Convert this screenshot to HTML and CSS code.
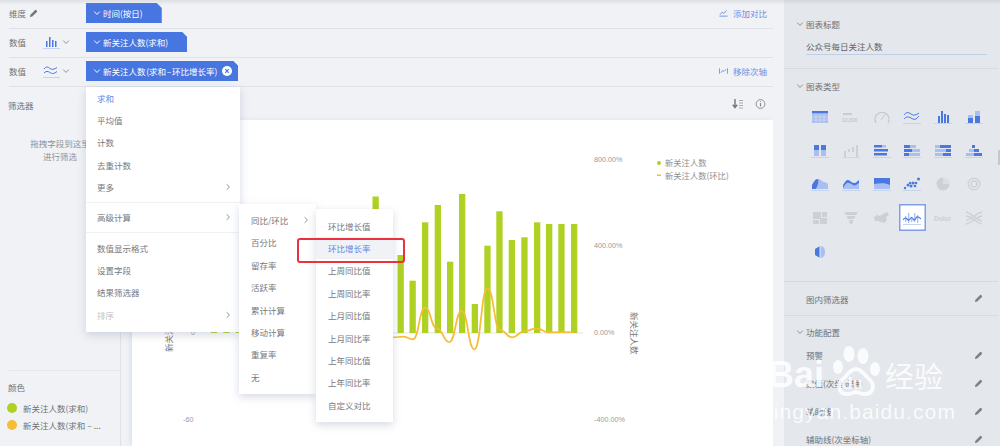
FILE: index.html
```html
<!DOCTYPE html>
<html lang="en">

<head>
  <meta charset="UTF-8" />
  <meta name="viewport" content="width=device-width, initial-scale=1.0" />
  <title>chart editor</title>
  <link rel="stylesheet" href="styles.css">
</head>

<body>
  <svg class="defs" width="0" height="0">
    <symbol id="pencil" viewBox="0 0 10 10">
      <path d="M1 9l.6-2.6L6.8 1.2a.8.8 0 0 1 1.1 0l.9.9a.8.8 0 0 1 0 1.1L3.6 8.4z" fill="currentColor" />
    </symbol>
    <symbol id="chev-down" viewBox="0 0 10 10">
      <path d="M1.5 3.2L5 6.8l3.5-3.6" fill="none" stroke="currentColor" stroke-width="1.2" />
    </symbol>
    <symbol id="chev-right" viewBox="0 0 10 10">
      <path d="M3.2 1.5L6.8 5 3.2 8.5" fill="none" stroke="currentColor" stroke-width="1.2" />
    </symbol>
  </svg>

  <div class="app">
    <div class="main">
      <div class="shelf">
        <div class="shelf-row row-dim">
          <div class="shelf-label">维度 <svg class="pencil-sm"><use href="#pencil" /></svg></div>
          <div class="pill"><svg class="pill-chev"><use href="#chev-down" /></svg>时间(按日)</div>
          <div class="shelf-action">
            <svg class="action-icon" viewBox="0 0 10 8"><path d="M.5 7.5h9M1 6l2.5-3 2 1.5L8.5 1" fill="none" stroke="currentColor" stroke-width="1" /></svg>
            添加对比
          </div>
        </div>
        <div class="shelf-row">
          <div class="shelf-label">数值
            <svg class="shelf-type" viewBox="0 0 17 13">
              <path d="M0 12.5h17" stroke="#c6d3ee" stroke-width="1" />
              <path d="M3 5h1.5v6H3zM6 1h1.5v10H6zM9 4h1.5v7H9zM12 5h1.5v6H12z" fill="#4a78e0" />
            </svg>
            <svg class="shelf-chev"><use href="#chev-down" /></svg>
          </div>
          <div class="pill"><svg class="pill-chev"><use href="#chev-down" /></svg>新关注人数(求和)</div>
        </div>
        <div class="shelf-row">
          <div class="shelf-label">数值
            <svg class="shelf-type" viewBox="0 0 17 13">
              <path d="M0 12.5h17" stroke="#c6d3ee" stroke-width="1" />
              <path d="M1 4c2-3 4-2 6-.5s4 1 7-1M1 8c2-2 4-2 6-.5s4 1.5 7-1" fill="none" stroke="#4a78e0" stroke-width="1" />
            </svg>
            <svg class="shelf-chev"><use href="#chev-down" /></svg>
          </div>
          <div class="pill pill-active">
            <svg class="pill-chev"><use href="#chev-down" /></svg>
            <span>新关注人数 (求和 – 环比增长率)</span>
            <svg class="pill-close" viewBox="0 0 10 10">
              <circle cx="5" cy="5" r="5" fill="#fff" />
              <path d="M3.2 3.2l3.6 3.6M6.8 3.2L3.2 6.8" stroke="#4a78e0" stroke-width="1.2" />
            </svg>
          </div>
          <div class="shelf-action">
            <svg class="action-icon" viewBox="0 0 10 8"><path d="M.5 1v6M9.5 1v6M2 6l2-2.5 1.5 1L8 2" fill="none" stroke="currentColor" stroke-width="1" /></svg>
            移除次轴
          </div>
        </div>
      </div>

      <div class="workspace">
        <div class="side">
          <div class="side-title">筛选器</div>
          <div class="side-hint">拖拽字段到这里<br>进行筛选</div>
          <div class="colors">
            <div class="side-title">颜色</div>
            <div class="color-item"><i class="dot dot-green"></i>新关注人数(求和)</div>
            <div class="color-item"><i class="dot dot-yellow"></i>新关注人数(求和 – ...</div>
          </div>
        </div>

        <div class="content">
          <div class="toolbar">
            <svg class="tool-icon" viewBox="0 0 11 10">
              <path d="M3 0v8M.8 5.8L3 8.6l2.2-2.8" fill="none" stroke="#777" stroke-width="1.4" />
              <path d="M7 1.5h4M7 4h4M7 6.5h4M7 9h4" stroke="#999" stroke-width=".8" />
            </svg>
            <svg class="tool-icon" viewBox="0 0 10 10">
              <circle cx="5" cy="5" r="4.4" fill="none" stroke="#888" stroke-width=".9" />
              <path d="M5 2.2v.9M5 4v3.6" stroke="#888" stroke-width="1.1" />
            </svg>
          </div>
          <div class="chart">
            <svg class="chart-svg" viewBox="132 120 641 326">
              <path d="M393 333h190" stroke="#e3e3e3" stroke-width="1" />
              <g fill="#aed123">
                <rect x="211" y="329" width="6.3" height="4" />
                <rect x="223.4" y="329" width="6.3" height="4" />
                <rect x="235.8" y="329" width="6.3" height="4" />
                <rect x="372.5" y="196.5" width="6.3" height="136.5" />
                <rect x="385" y="255" width="6.3" height="78" />
                <rect x="397.5" y="255" width="6.3" height="78" />
                <rect x="409.5" y="280.7" width="6.3" height="52.3" />
                <rect x="422" y="222.3" width="6.3" height="110.7" />
                <rect x="434.7" y="205" width="6.3" height="128" />
                <rect x="447" y="261.7" width="6.3" height="71.3" />
                <rect x="459" y="194" width="6.3" height="139" />
                <rect x="471.7" y="304" width="6.3" height="29" />
                <rect x="484.3" y="245.7" width="6.3" height="87.3" />
                <rect x="496.3" y="211.3" width="6.3" height="121.7" />
                <rect x="508.7" y="240" width="6.3" height="93" />
                <rect x="521.3" y="237.3" width="6.3" height="95.7" />
                <rect x="534" y="222.3" width="6.3" height="110.7" />
                <rect x="546" y="224" width="6.3" height="109" />
                <rect x="558.3" y="224" width="6.3" height="109" />
                <rect x="571" y="224" width="6.3" height="109" />
              </g>
              <path class="curve" d="M393 337.3C398 337.3 398 336.7 403 336.7C408 336.7 408 339.3 413 339.3C419 339.3 419 307.7 425 307.7C431 307.7 431 328.3 436.7 328.3C443 328.3 443 342 449.3 342C455.5 342 455.5 311 461.7 311C468 311 468 349.3 474.3 349.3C481 349.3 481 288.3 487.3 288.3C494 288.3 494 330 500 330C506 330 506 337.3 512.3 337.3C518.5 337.3 518.5 331 525 331C531 331 531 328.3 536.7 328.3C542.5 328.3 542.5 332.3 548.3 332.3C561 332.3 561 332 573.3 332" />
              <g class="axis-text">
                <text x="594" y="161.500">800.00%</text>
                <text x="594" y="248">400.00%</text>
                <text x="594" y="335">0.00%</text>
                <text x="594" y="422">-400.00%</text>
                <text x="191" y="335">0</text>
                <text x="183" y="422">-60</text>
              </g>
              <g class="axis-title">
                <text transform="translate(631 312) rotate(90)">新关注人数</text>
                <text transform="translate(172 352) rotate(-90)">新关注人数</text>
              </g>
              <circle cx="659" cy="163" r="2" fill="#aed123" />
              <rect x="657" y="174.500" width="4" height="1.500" fill="#f6bd34" />
              <g class="legend-text">
                <text x="665" y="166">新关注人数</text>
                <text x="665" y="179">新关注人数(环比)</text>
              </g>
            </svg>
          </div>
        </div>
      </div>
    </div>

    <div class="panel">
      <div class="panel-thumb"></div>
      <div class="panel-section section-title">
        <div class="panel-heading"><svg class="heading-chev"><use href="#chev-down" /></svg>图表标题</div>
        <div class="title-input">公众号每日关注人数</div>
      </div>
      <div class="panel-section section-types">
        <div class="panel-heading"><svg class="heading-chev"><use href="#chev-down" /></svg>图表类型</div>
        <div class="type-grid">
          <div class="type-cell"><svg viewBox="0 0 18 14"><path d="M1 1h16v2.500H1z" fill="#4a78e0" /><path d="M1 4h16v9H1z" fill="#a9bff0" /><path d="M1 7h16M1 10h16M5 4v9M9 4v9M13 4v9" stroke="#e4e7eb" stroke-width=".5" /></svg></div>
          <div class="type-cell"><svg viewBox="0 0 18 14"><path d="M1 3h9v2H1z" fill="#c9ccd0" /><text class="kpi-text" x="0" y="11.500">12,816</text></svg></div>
          <div class="type-cell"><svg viewBox="0 0 18 14"><path d="M3 13a7 7 0 1 1 12 0" fill="none" stroke="#c4c7cb" stroke-width="1.200" /><path d="M8.500 9.500L12 4.500" stroke="#c4c7cb" stroke-width="1" /></svg></div>
          <div class="type-cell"><svg viewBox="0 0 18 14"><path d="M0 13.500h18" stroke="#c6d3ee" /><path d="M1 5c2-3 4-3 7-1s5 1 8-1M1 9c2-2 4-3 7-1s5 2 8-2" fill="none" stroke="#4a78e0" stroke-width="1" /></svg></div>
          <div class="type-cell"><svg viewBox="0 0 18 14"><path d="M0 13.500h18" stroke="#c6d3ee" /><path d="M4 6h2v7H4zM7 1h2v12H7zM10 4h2v9h-2zM13 5h2v8h-2z" fill="#4a78e0" /></svg></div>
          <div class="type-cell"><svg viewBox="0 0 18 14"><path d="M0 13.500h18" stroke="#c6d3ee" /><path d="M3 8h5v5H3zM10 6h5v7h-5z" fill="#4a78e0" /><path d="M3 5h5v3H3zM10 1h5v5h-5z" fill="#a9bff0" /></svg></div>

          <div class="type-cell"><svg viewBox="0 0 18 14"><path d="M0 13.500h18" stroke="#c6d3ee" /><path d="M3 1h5v5H3zM10 1h5v5h-5z" fill="#4a78e0" /><path d="M3 6h5v6H3zM10 6h5v6h-5z" fill="#a9bff0" /></svg></div>
          <div class="type-cell"><svg viewBox="0 0 18 14"><path d="M0 13.500h18" stroke="#d5d8dc" /><path d="M2 7h2v6H2zM6 5h2v3H6zM10 3h2v5h-2zM14 1h2v12h-2z" fill="#cdd0d4" /></svg></div>
          <div class="type-cell"><svg viewBox="0 0 18 14"><path d="M0 13.500h18" stroke="#c6d3ee" /><path d="M1 1h8v2.500H1zM1 5h14v2.500H1zM1 9h13v2.500H1z" fill="#4a78e0" /><path d="M9 1h4v2.500H9z" fill="#a9bff0" /></svg></div>
          <div class="type-cell"><svg viewBox="0 0 18 14"><path d="M0 13.500h18" stroke="#c6d3ee" /><path d="M1 1h6v3H1zM1 5h8v3H1zM1 9h5v3H1z" fill="#4a78e0" /><path d="M7 1h6v3H7zM9 5h8v3H9zM6 9h11v3H6z" fill="#a9bff0" /></svg></div>
          <div class="type-cell"><svg viewBox="0 0 18 14"><path d="M0 13.500h18" stroke="#c6d3ee" /><path d="M1 1h5v3H1zM1 5h11v3H1zM1 9h8v3H1z" fill="#a9bff0" /><path d="M6 1h11v3H6zM12 5h5v3h-5zM9 9h8v3H9z" fill="#4a78e0" /></svg></div>
          <div class="type-cell"><svg viewBox="0 0 18 14"><path d="M0 13.500h18" stroke="#c6d3ee" /><path d="M7 1h3v3H7zM9 5h5v3H9zM9 9h8v3H9z" fill="#4a78e0" /><path d="M4 5h5v3H4zM1 9h8v3H1z" fill="#a9bff0" /></svg></div>

          <div class="type-cell"><svg viewBox="0 0 18 14"><path d="M0 13.500h18" stroke="#c6d3ee" /><path d="M1 12V8c2-3 3-6 6-6s4 3 6 3 3 1 4 2v5z" fill="#a9bff0" /><path d="M1 8c2-3 3-6 6-6 1 2 0 6-2 10H1z" fill="#4a78e0" /></svg></div>
          <div class="type-cell"><svg viewBox="0 0 18 14"><path d="M0 13.500h18" stroke="#c6d3ee" /><path d="M1 12V8c2-3 3-5 5-5s3 3 6 3 3-2 5-3v9z" fill="#a9bff0" /><path d="M1 8c2-3 3-5 5-5s3 3 6 3 3-2 5-3v3c-3 2-4 3-6 2S7 5 5 6 2 9 1 11z" fill="#4a78e0" /></svg></div>
          <div class="type-cell"><svg viewBox="0 0 18 14"><path d="M0 13.500h18" stroke="#c6d3ee" /><path d="M1 1h16v11H1z" fill="#a9bff0" /><path d="M1 1h16v7C13 6 8 6 1 7z" fill="#4a78e0" /></svg></div>
          <div class="type-cell"><svg viewBox="0 0 18 14"><path d="M0 13.500h18" stroke="#c6d3ee" /><g fill="#4a78e0"><circle cx="2" cy="11" r="1.200" /><circle cx="5" cy="8" r="1.500" /><circle cx="8" cy="9" r="1.500" /><circle cx="10" cy="6" r="1.600" /><circle cx="13" cy="6" r="1.300" /><circle cx="15.500" cy="2" r="1.500" /><circle cx="7" cy="6" r="1.200" /><circle cx="12" cy="9" r="1.300" /></g></svg></div>
          <div class="type-cell"><svg viewBox="0 0 18 14"><circle cx="9" cy="7" r="6.500" fill="#cdd0d4" /><path d="M9 7V.5A6.500 6.500 0 0 1 15.500 7z" fill="#dcdfe2" /></svg></div>
          <div class="type-cell"><svg viewBox="0 0 18 14"><circle cx="9" cy="7" r="5.800" fill="none" stroke="#cdd0d4" stroke-width="1.300" /><circle cx="9" cy="7" r="3" fill="none" stroke="#cdd0d4" stroke-width="1.300" /></svg></div>

          <div class="type-cell"><svg viewBox="0 0 18 14"><path d="M2 1h8v7H2zM2 9h6v4H2zM11 1h5v5h-5zM9 7h7v6H9z" fill="#cdd0d4" /></svg></div>
          <div class="type-cell"><svg viewBox="0 0 18 14"><path d="M2 1h14l-2 3H4zM4.500 5h9L12 8H6zM6.500 9h5L10 13H8z" fill="#cdd0d4" /></svg></div>
          <div class="type-cell"><svg viewBox="0 0 18 14"><path d="M1 6l3-2 3 1 3-2 4-2 2 3-3 2 1 3-3 3-3-1-3-1-3 0z" fill="#cdd0d4" /></svg></div>
          <div class="type-cell type-selected"><svg viewBox="0 0 18 14"><path d="M0 13.500h18" stroke="#c6d3ee" /><path d="M2 5h1.300v6H2zM5 2h1.300v10H5zM8 6h1.300v5H8zM11 2h1.300v9H11zM14 4h1.300v8H14z" fill="#a9bff0" /><path d="M0 9c2-3 3-2 4-1s2 2 3 0 2-2 3 0 2 1 3-1 3-1 5 1" fill="none" stroke="#4a78e0" stroke-width="1.200" /></svg></div>
          <div class="type-cell"><svg viewBox="0 0 18 14"><text class="cloud-text" x="0" y="9.500">Dolor</text></svg></div>
          <div class="type-cell"><svg viewBox="0 0 18 14"><path d="M1 1c6 1 10 8 16 9M1 5c6 0 10 7 16 8M1 9c6 0 10-7 16-8M1 13c6-1 10-7 16-8" fill="none" stroke="#cdd0d4" stroke-width="1.300" /></svg></div>

          <div class="type-cell"><svg viewBox="0 0 18 14"><path d="M9 1L4 4v6l5 3z" fill="#4a78e0" /><path d="M9 1c4 0 5 3 5 6s-1 6-5 6z" fill="#a9bff0" /><path d="M9 1v12" stroke="#fff" stroke-width=".8" /></svg></div>
        </div>
      </div>
      <div class="panel-section section-row">
        <div class="panel-item">图内筛选器<svg class="pencil"><use href="#pencil" /></svg></div>
      </div>
      <div class="panel-section section-func">
        <div class="panel-heading"><svg class="heading-chev"><use href="#chev-down" /></svg>功能配置</div>
        <div class="panel-item">预警<svg class="pencil"><use href="#pencil" /></svg></div>
        <div class="panel-item">数值(次坐标轴)<svg class="pencil"><use href="#pencil" /></svg></div>
        <div class="panel-item">辅助线<svg class="pencil"><use href="#pencil" /></svg></div>
        <div class="panel-item">辅助线(次坐标轴)<svg class="pencil"><use href="#pencil" /></svg></div>
      </div>
    </div>

    <!-- 下拉菜单 -->
    <div class="menu menu-main">
      <div class="menu-item is-active">求和</div>
      <div class="menu-item">平均值</div>
      <div class="menu-item">计数</div>
      <div class="menu-item">去重计数</div>
      <div class="menu-item">更多<svg class="menu-arrow"><use href="#chev-right" /></svg></div>
      <div class="menu-line"></div>
      <div class="menu-item">高级计算<svg class="menu-arrow"><use href="#chev-right" /></svg></div>
      <div class="menu-line"></div>
      <div class="menu-item">数值显示格式</div>
      <div class="menu-item">设置字段</div>
      <div class="menu-item">结果筛选器</div>
      <div class="menu-item is-disabled">排序<svg class="menu-arrow"><use href="#chev-right" /></svg></div>
    </div>
    <div class="menu menu-calc">
      <div class="menu-item">同比/环比<svg class="menu-arrow"><use href="#chev-right" /></svg></div>
      <div class="menu-item">百分比</div>
      <div class="menu-item">留存率</div>
      <div class="menu-item">活跃率</div>
      <div class="menu-item">累计计算</div>
      <div class="menu-item">移动计算</div>
      <div class="menu-item">重复率</div>
      <div class="menu-item">无</div>
    </div>
    <div class="menu menu-compare">
      <div class="menu-item">环比增长值</div>
      <div class="menu-item is-active is-hover">环比增长率</div>
      <div class="menu-item">上周同比值</div>
      <div class="menu-item">上周同比率</div>
      <div class="menu-item">上月同比值</div>
      <div class="menu-item">上月同比率</div>
      <div class="menu-item">上年同比值</div>
      <div class="menu-item">上年同比率</div>
      <div class="menu-item">自定义对比</div>
    </div>
    <div class="red-box"></div>

    <!-- 水印 -->
    <div class="watermark">
      <div class="wm-top">
        <span class="wm-bai">Bai</span>
        <svg class="wm-paw" viewBox="0 0 50 52">
          <ellipse cx="6" cy="22" rx="5" ry="7" fill="#fff" />
          <ellipse cx="17" cy="9" rx="5.500" ry="8" fill="#fff" />
          <ellipse cx="31" cy="11" rx="5.500" ry="8" fill="#fff" />
          <ellipse cx="43" cy="24" rx="5" ry="7" fill="#fff" />
          <path d="M24 24c6 0 8 6 14 11 6 6 2 15-6 14-4 0-6-2-8-2s-4 2-8 2c-8 1-12-8-6-14 6-5 8-11 14-11z" fill="none" stroke="#fff" stroke-width="4" />
          <text class="wm-du" x="10" y="44">du</text>
        </svg>
        <span class="wm-cn">经验</span>
      </div>
      <div class="wm-url">jingyan.baidu.com</div>
    </div>
    <div class="top-shadow"></div>
  </div>
</body>

</html>
```

FILE: styles.css
```css
* {
  margin: 0;
  padding: 0;
  box-sizing: border-box;
}

body {
  font-family: "Noto Sans CJK SC", "Liberation Sans", sans-serif;
  font-size: 8.5px;
  color: #6e7278;
  background: #f0f2f5;
  overflow: hidden;
}

.defs {
  position: absolute;
}

.app {
  position: relative;
  width: 1000px;
  height: 446px;
  display: flex;
  overflow: hidden;
}

.top-shadow {
  position: absolute;
  left: 0;
  top: 0;
  width: 100%;
  height: 5px;
  background: linear-gradient(rgba(150, 155, 170, .22), rgba(150, 155, 170, 0));
}

/* 左侧主区域 */
.main {
  width: 784px;
  display: flex;
  flex-direction: column;
}

.shelf {
  padding: 0 11px 0 9px;
}

.shelf-row {
  height: 29px;
  display: flex;
  align-items: center;
  border-bottom: 1px solid #dfe2e6;
  padding-bottom: 2px;
}

.shelf-label {
  width: 77px;
  display: flex;
  align-items: center;
}

.pencil-sm {
  width: 9px;
  height: 9px;
  margin-left: 3px;
  color: #777;
}

.shelf-type {
  width: 17px;
  height: 13px;
  margin-left: 17px;
}

.shelf-chev {
  width: 8px;
  height: 8px;
  margin-left: 2px;
  color: #8b8f95;
}

.pill {
  height: 20px;
  background: #4776e0;
  color: #fff;
  display: flex;
  align-items: center;
  padding: 0 19px 0 7px;
  clip-path: polygon(0 0, calc(100% - 5px) 0, 100% 5px, 100% 100%, 0 100%);
}

.pill-chev {
  width: 8px;
  height: 8px;
  margin-right: 2px;
}

.pill-active {
  padding-right: 6px;
  word-spacing: -1.2px;
}

.pill-close {
  width: 10px;
  height: 10px;
  margin-left: 5px;
}

.shelf-action {
  margin-left: auto;
  display: flex;
  align-items: center;
  gap: 5px;
  color: #6c90e4;
  padding-right: 6px;
}

.action-icon {
  width: 9px;
  height: 8px;
}

.workspace {
  flex: 1;
  display: flex;
  min-height: 0;
}

.side {
  width: 121px;
  border-right: 1px solid #dfe2e6;
  display: flex;
  flex-direction: column;
  padding-left: 8px;
}

.side-title {
  line-height: 14px;
  margin-top: 11px;
}

.side-hint {
  width: 104px;
  margin-top: 25px;
  line-height: 13px;
  text-align: center;
  color: #90949a;
}

.colors {
  margin-top: auto;
  height: 76px;
  margin-left: 1px;
  border-top: 1px solid #e3e6ea;
}

.colors .side-title {
  margin-left: -1px;
  margin-top: 9px;
  margin-bottom: 5px;
}

.color-item {
  height: 17px;
  display: flex;
  align-items: center;
  gap: 6px;
  margin-left: -2px;
}

.dot {
  width: 10px;
  height: 10px;
  border-radius: 50%;
}

.dot-green {
  background: #aed123;
}

.dot-yellow {
  background: #f6bd34;
}

.content {
  flex: 1;
  display: flex;
  flex-direction: column;
  padding: 0 11px;
}

.toolbar {
  height: 33px;
  display: flex;
  align-items: center;
  justify-content: flex-end;
  gap: 12px;
  padding-right: 7px;
}

.tool-icon {
  width: 11px;
  height: 10px;
}

.chart {
  flex: 1;
  background: #fff;
  box-shadow: -2px 0 4px rgba(190, 200, 230, .35);
}

.chart-svg {
  display: block;
  width: 641px;
  height: 326px;
}

.curve {
  fill: none;
  stroke: #f6bd34;
  stroke-width: 1.7;
}

.axis-text text {
  font-family: "Liberation Sans", sans-serif;
  font-size: 7.2px;
  fill: #9a9a9a;
}

.axis-title text {
  font-size: 8.5px;
  fill: #777;
}

.legend-text text {
  font-size: 8.3px;
  fill: #8f8f8f;
}

/* 右侧面板 */
.panel {
  position: relative;
  width: 216px;
  background: #e4e7eb;
  padding-right: 2px;
}

.panel-thumb {
  position: absolute;
  right: 0;
  top: 150px;
  width: 2px;
  height: 15px;
  background: #c4c7cc;
}

.panel-section {
  border-bottom: 1px solid #d7dade;
  padding-left: 22px;
}

.panel-heading {
  display: flex;
  align-items: center;
  line-height: 14px;
  position: relative;
}

.heading-chev {
  position: absolute;
  left: -10px;
  top: 3px;
  width: 8px;
  height: 8px;
  color: #8b8f95;
}

.section-title {
  height: 69px;
  padding-top: 17px;
}

.title-input {
  width: 181px;
  margin-top: 9px;
  line-height: 13px;
  padding-bottom: 1px;
  color: #5f6368;
  border-bottom: 1px solid #c0cee9;
}

.section-types {
  height: 213px;
  padding-top: 10px;
  padding-left: 0;
}

.section-types .panel-heading {
  margin-left: 22px;
}

.type-grid {
  display: grid;
  grid-template-columns: repeat(6, 30.8px);
  grid-auto-rows: 33.7px;
  margin: 7px 0 0 20.600px;
}

.type-cell {
  display: flex;
  align-items: center;
  justify-content: center;
}

.type-cell svg {
  width: 18px;
  height: 14px;
}

.type-selected {
  background: #fff;
  box-shadow: 0 0 0 1.500px #7f9fe8 inset;
  width: 27px;
  height: 27px;
  justify-self: center;
  align-self: center;
}

.kpi-text {
  font-family: "Liberation Sans", sans-serif;
  font-size: 5px;
  font-weight: bold;
  fill: #c4c7cb;
}

.cloud-text {
  font-family: "Liberation Sans", sans-serif;
  font-size: 6.500px;
  font-weight: bold;
  fill: #cdd0d4;
}

.section-row {
  height: 34px;
  display: flex;
  align-items: center;
}

.panel-item {
  flex: 1;
  height: 28px;
  display: flex;
  align-items: center;
  justify-content: space-between;
  padding-right: 15px;
}

.pencil {
  width: 9px;
  height: 9px;
  color: #7c8086;
}

.section-func {
  border-bottom: none;
  padding-top: 9px;
}

.section-func .panel-heading {
  margin-bottom: 2px;
}

/* 下拉菜单 */
.menu {
  position: absolute;
  background: #fff;
  box-shadow: 0 3px 8px rgba(140, 150, 180, .35);
}

.menu-main {
  left: 86px;
  top: 86.500px;
  width: 154px;
  height: 245.500px;
}

.menu-calc {
  left: 239px;
  top: 204px;
  width: 77px;
  height: 190px;
  padding-top: 4.800px;
}

.menu-compare {
  left: 316px;
  top: 209px;
  width: 77px;
  height: 213px;
  padding-top: 5.500px;
}

.menu-item {
  height: 22.400px;
  display: flex;
  align-items: center;
  justify-content: space-between;
  padding: 0 8px 0 11px;
  color: #75797f;
}

.menu-calc .menu-item,
.menu-compare .menu-item {
  padding-left: 12px;
}

.menu-calc .menu-item {
  padding-right: 6px;
}

.is-active {
  color: #5f88e6;
}

.is-hover {
  background: #f0f2f5;
}

.is-disabled {
  color: #c2c4c8;
}

.menu-line {
  height: 1px;
  margin: 3.400px 0;
  background: #f0f1f3;
}

.menu-arrow {
  width: 8px;
  height: 8px;
  color: #8b8f95;
}

.red-box {
  position: absolute;
  left: 297px;
  top: 237.500px;
  width: 108px;
  height: 25px;
  border: 2px solid #e9323f;
  border-radius: 3px;
}

/* 水印 */
.watermark {
  position: absolute;
  left: 768px;
  top: 345px;
  width: 185px;
  opacity: .85;
  color: #fff;
  pointer-events: none;
}

.wm-top {
  height: 52px;
  display: flex;
  align-items: flex-end;
}

.wm-bai {
  font-family: "Liberation Sans", sans-serif;
  font-weight: bold;
  font-size: 36px;
  line-height: 44px;
  width: 64px;
}

.wm-paw {
  width: 50px;
  height: 52px;
}

.wm-du {
  font-family: "Liberation Sans", sans-serif;
  font-size: 17px;
  font-weight: bold;
  fill: #fff;
}

.wm-cn {
  font-size: 29px;
  line-height: 44px;
  margin-left: 3px;
}

.wm-url {
  font-family: "Liberation Sans", sans-serif;
  font-size: 21px;
  line-height: 24px;
  margin-top: 3px;
  letter-spacing: 1.100px;
}
```
